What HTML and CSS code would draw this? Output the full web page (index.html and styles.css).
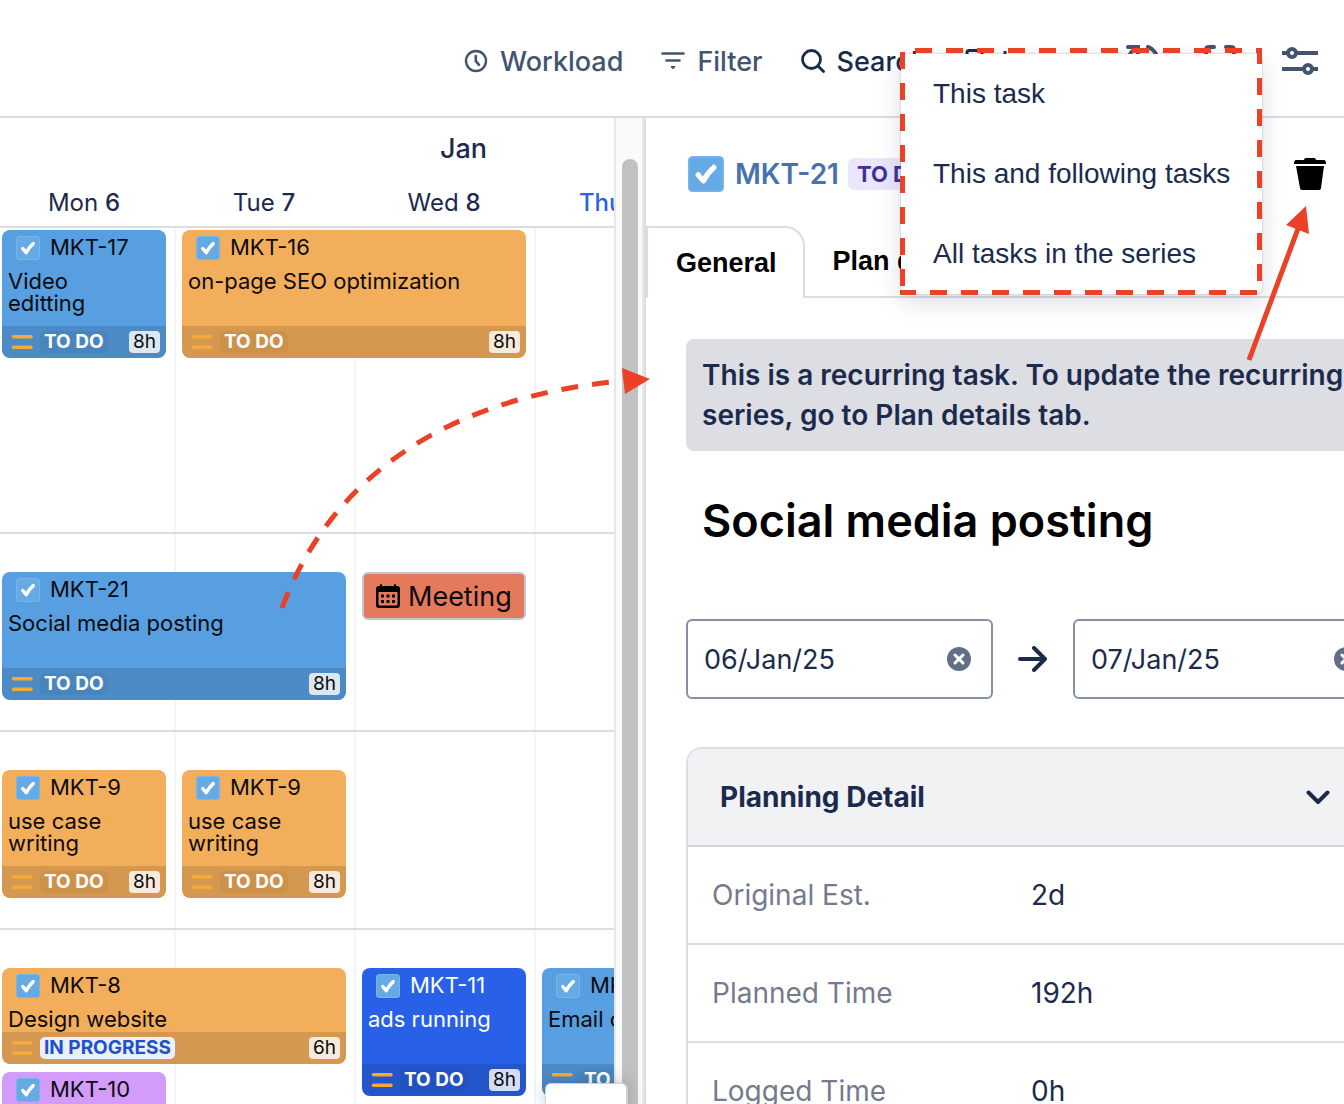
FILE: index.html
```html
<!DOCTYPE html>
<html lang="en">
<head>
  <meta charset="UTF-8" />
  <meta name="viewport" content="width=device-width, initial-scale=1" />
  <title>Planner - MKT-21</title>
  <link rel="stylesheet" href="styles.css">
</head>
<body>
  <!-- shared icons -->
  <svg class="sprite" aria-hidden="true">
    <symbol id="task" viewBox="0 0 24 24">
      <rect x="0.5" y="0.5" width="23" height="23" rx="2.5" fill="#65aae5" stroke="#7ab5e8" />
      <path d="M6.800 12.600l3.400 4q3-5.500 7-9" fill="none" stroke="#fff" stroke-width="3.5" stroke-linecap="round" stroke-linejoin="round" />
    </symbol>
    <symbol id="medium" viewBox="0 0 22 16">
      <path d="M2.500 2.800h17.500M2.500 13.200h17.500" fill="none" stroke="#f5aa37" stroke-width="3.6" stroke-linecap="round" />
    </symbol>
    <symbol id="clear" viewBox="0 0 24 24">
      <circle cx="12" cy="12" r="12" fill="#626f86" />
      <path d="M8 8l8 8M16 8l-8 8" stroke="#fff" stroke-width="3" stroke-linecap="round" />
    </symbol>
  </svg>

  <div class="page">
    <!-- top toolbar -->
    <header class="toolbar">
      <button class="tool" type="button">
        <svg class="tool-icon" viewBox="0 0 24 24"><circle cx="12" cy="12" r="10" fill="none" stroke="currentColor" stroke-width="2.4" /><path d="M11.8 7v5l3.2 3.800" fill="none" stroke="currentColor" stroke-width="2.6" stroke-linecap="round" /></svg>
        <span>Workload</span>
      </button>
      <button class="tool" type="button">
        <svg class="tool-icon" viewBox="0 0 24 24"><path d="M1.500 4.500h21M5.500 11.500h13" fill="none" stroke="currentColor" stroke-width="2.6" stroke-linecap="round" /><path d="M10 17.500h4l-1.500 2h-1z" fill="currentColor" stroke="currentColor" stroke-linejoin="round" /></svg>
        <span>Filter</span>
      </button>
      <button class="tool tool-dark" type="button">
        <svg class="tool-icon" viewBox="0 0 24 24"><circle cx="10.5" cy="10.5" r="9" fill="none" stroke="currentColor" stroke-width="2.8" /><path d="M17 17l5.500 5.500" stroke="currentColor" stroke-width="2.8" stroke-linecap="round" /></svg>
        <span>Search</span>
      </button>
      <button class="tool tool-dark" type="button" aria-label="Board">
        <svg class="board-icon" viewBox="0 0 44 26"><rect x="2" y="2.5" width="15" height="22" rx="2" fill="none" stroke="currentColor" stroke-width="3" /><path d="M40 3v22" stroke="currentColor" stroke-width="3" /></svg>
      </button>
      <div class="tool-group">
        <button class="tool" type="button" aria-label="Refresh">
          <svg class="group-icon" viewBox="0 0 32 32"><path d="M2 2h10v9M11 3A14 14 0 0 0 9 28M22 2a14 14 0 0 1 1 26M30 30H20v-9" fill="none" stroke="currentColor" stroke-width="4" stroke-linecap="round" /></svg>
        </button>
        <button class="tool" type="button" aria-label="Full screen">
          <svg class="group-icon" viewBox="0 0 32 32"><path d="M2 11V5q0-3 3-3h5M22 2h5q3 0 3 3v6M2 21v6q0 3 3 3h5M22 30h5q3 0 3-3v-6" fill="none" stroke="currentColor" stroke-width="4" stroke-linecap="round" /></svg>
        </button>
        <button class="tool" type="button" aria-label="View settings">
          <svg class="slider-icon" viewBox="0 0 36 28"><path d="M0 6h36M0 22h36" stroke="currentColor" stroke-width="4" /><circle cx="10" cy="6" r="4" fill="#fff" stroke="currentColor" stroke-width="4" /><circle cx="26" cy="22" r="4" fill="#fff" stroke="currentColor" stroke-width="4" /></svg>
        </button>
      </div>
    </header>

    <div class="main">
      <!-- timeline -->
      <section class="timeline">
        <div class="timeline-head">
          <div class="month">Jan</div>
          <div class="days">
            <div class="day">Mon <b>6</b></div>
            <div class="day">Tue <b>7</b></div>
            <div class="day">Wed <b>8</b></div>
            <div class="day today">Thu <b>9</b></div>
          </div>
        </div>

        <div class="lanes">
          <div class="lane lane-first">
            <article class="card blue">
              <div class="card-id"><svg class="task-icon"><use href="#task" /></svg>MKT-17</div>
              <div class="card-title">Video editting</div>
              <div class="card-foot"><svg class="prio"><use href="#medium" /></svg><span class="status">TO DO</span><span class="hours">8h</span></div>
            </article>
            <article class="card orange wide">
              <div class="card-id"><svg class="task-icon"><use href="#task" /></svg>MKT-16</div>
              <div class="card-title">on-page SEO optimization</div>
              <div class="card-foot"><svg class="prio"><use href="#medium" /></svg><span class="status">TO DO</span><span class="hours">8h</span></div>
            </article>
          </div>

          <div class="lane">
            <article class="card blue wide">
              <div class="card-id"><svg class="task-icon"><use href="#task" /></svg>MKT-21</div>
              <div class="card-title">Social media posting</div>
              <div class="card-foot"><svg class="prio"><use href="#medium" /></svg><span class="status">TO DO</span><span class="hours">8h</span></div>
            </article>
            <div class="event">
              <svg class="event-icon" viewBox="0 0 24 24"><path d="M3 2h1V1q0-1 1-1t1 1v1h12V1q0-1 1-1t1 1v1h1q3 0 3 3v16q0 3-3 3H3q-3 0-3-3V5q0-3 3-3zm-.5 6v12q0 1.500 1.500 1.500h16q1.500 0 1.500-1.500V8z" fill-rule="evenodd" /><path d="M5 10.500h3v3H5zM10.500 10.500h3v3h-3zM16 10.500h3v3h-3zM5 16h3v3H5zM10.500 16h3v3h-3zM16 16h3v3h-3z" /></svg>
              <span>Meeting</span>
            </div>
          </div>

          <div class="lane">
            <article class="card orange">
              <div class="card-id"><svg class="task-icon"><use href="#task" /></svg>MKT-9</div>
              <div class="card-title">use case writing</div>
              <div class="card-foot"><svg class="prio"><use href="#medium" /></svg><span class="status">TO DO</span><span class="hours">8h</span></div>
            </article>
            <article class="card orange">
              <div class="card-id"><svg class="task-icon"><use href="#task" /></svg>MKT-9</div>
              <div class="card-title">use case writing</div>
              <div class="card-foot"><svg class="prio"><use href="#medium" /></svg><span class="status">TO DO</span><span class="hours">8h</span></div>
            </article>
          </div>

          <div class="lane">
            <article class="card orange wide short">
              <div class="card-id"><svg class="task-icon"><use href="#task" /></svg>MKT-8</div>
              <div class="card-title">Design website</div>
              <div class="card-foot"><svg class="prio"><use href="#medium" /></svg><span class="status progress">IN PROGRESS</span><span class="hours">6h</span></div>
            </article>
            <article class="card navy tall">
              <div class="card-id"><svg class="task-icon"><use href="#task" /></svg>MKT-11</div>
              <div class="card-title">ads running</div>
              <div class="card-foot"><svg class="prio"><use href="#medium" /></svg><span class="status">TO DO</span><span class="hours">8h</span></div>
            </article>
            <article class="card blue tall">
              <div class="card-id"><svg class="task-icon"><use href="#task" /></svg>MKT</div>
              <div class="card-title">Email c</div>
              <div class="card-foot"><svg class="prio"><use href="#medium" /></svg><span class="status">TO DO</span></div>
            </article>
            <article class="card purple">
              <div class="card-id"><svg class="task-icon"><use href="#task" /></svg>MKT-10</div>
            </article>
          </div>
        </div>
      </section>

      <!-- scroll bar of the timeline -->
      <div class="scroll-track">
        <div class="scroll-thumb"></div>
      </div>

      <!-- task details -->
      <aside class="details">
        <div class="details-head">
          <svg class="head-icon"><use href="#task" /></svg>
          <a class="task-key" href="#">MKT-21</a>
          <span class="badge">TO DO</span>
          <button class="trash" type="button" aria-label="Delete task">
            <svg viewBox="0 0 32 32"><path d="M10 2q0-2 2-2h8q2 0 2 2h8q2 0 2 4H0q0-4 2-4zM2 8h28l-3 22q0 2-2 2H8q-2 0-2-2z" /></svg>
          </button>
        </div>

        <nav class="tabs">
          <a class="tab active" href="#">General</a>
          <a class="tab" href="#">Plan details</a>
        </nav>

        <div class="details-body">
          <p class="notice">This is a recurring task. To update the recurring series, go to Plan details tab.</p>
          <h1>Social media posting</h1>

          <div class="dates">
            <div class="date">
              <input type="text" value="06/Jan/25" aria-label="Start date">
              <button type="button" aria-label="Clear start date"><svg><use href="#clear" /></svg></button>
            </div>
            <svg class="arrow" viewBox="0 0 30 26"><path d="M2 13h24M16 2l11 11-11 11" fill="none" stroke="currentColor" stroke-width="4" stroke-linecap="round" stroke-linejoin="round" /></svg>
            <div class="date">
              <input type="text" value="07/Jan/25" aria-label="End date">
              <button type="button" aria-label="Clear end date"><svg><use href="#clear" /></svg></button>
            </div>
          </div>

          <div class="planning">
            <button class="planning-head" type="button">
              <span>Planning Detail</span>
              <svg viewBox="0 0 24 14"><path d="M2.500 2.500L12 12l9.500-9.500" fill="none" stroke="currentColor" stroke-width="4" stroke-linecap="round" stroke-linejoin="round" /></svg>
            </button>
            <table>
              <tr><th scope="row">Original Est.</th><td>2d</td></tr>
              <tr><th scope="row">Planned Time</th><td>192h</td></tr>
              <tr><th scope="row">Logged Time</th><td>0h</td></tr>
            </table>
          </div>
        </div>
      </aside>
    </div>

    <!-- small popup over the bottom of the timeline -->
    <div class="popup"></div>

    <!-- delete menu -->
    <div class="menu" role="menu">
      <button type="button" role="menuitem">This task</button>
      <button type="button" role="menuitem">This and following tasks</button>
      <button type="button" role="menuitem">All tasks in the series</button>
    </div>

    <!-- red arrows and dashed frame -->
    <svg class="marks" viewBox="0 0 1344 1104" width="1344" height="1104" aria-hidden="true">
      <g fill="none" stroke="#eb4126" stroke-width="5">
        <g stroke-dasharray="17 14">
          <path d="M915 50.500H1262" />
          <path d="M1259.500 48V295" stroke-dashoffset="1" />
          <path d="M900 292.500H1262" stroke-dashoffset="1" />
          <path d="M902.500 52V295" />
          <path d="M282 608C328 484 438 398 622 381" />
        </g>
        <path d="M1249 360L1299 226" />
      </g>
      <path d="M650 379L622 368L625 394ZM1306 206L1286 225L1309 234Z" fill="#eb4126" />
    </svg>
  </div>
</body>
</html>
```

FILE: styles.css
```css
* {
  box-sizing: border-box;
}

body {
  margin: 0;
  background: #fff;
  color: #1c2b4d;
  font-family: Inter, "Liberation Sans", sans-serif;
  font-size: 28px;
}

button {
  border: 0;
  padding: 0;
  background: none;
  color: inherit;
  font: inherit;
  cursor: pointer;
}

a {
  color: inherit;
  text-decoration: none;
}

svg {
  display: block;
}

.sprite {
  position: absolute;
  width: 0;
  height: 0;
}

.page {
  position: relative;
  display: flex;
  flex-direction: column;
  height: 100vh;
  overflow: hidden;
}

/* top toolbar */
.toolbar {
  display: flex;
  align-items: center;
  gap: 38px;
  flex: none;
  height: 118px;
  padding: 6px 26px 0 464px;
  border-bottom: 2px solid #dcdde3;
}

.tool {
  display: flex;
  align-items: center;
  gap: 12px;
  color: #44546f;
  font-size: 27px;
  font-weight: 500;
}

.tool-dark {
  color: #172b4d;
}

.tool-icon {
  width: 24px;
  height: 24px;
}

.board-icon {
  width: 44px;
  height: 26px;
}

.tool-group {
  display: flex;
  align-items: center;
  gap: 46px;
  margin-left: auto;
}

.group-icon {
  width: 32px;
  height: 32px;
}

.slider-icon {
  width: 36px;
  height: 28px;
}

.main {
  display: flex;
  flex: 1;
  min-height: 0;
}

/* timeline */
.timeline {
  display: flex;
  flex-direction: column;
  flex: 1;
  min-width: 0;
  overflow: hidden;
}

.timeline-head {
  flex: none;
  height: 110px;
  padding-top: 13px;
  border-bottom: 2px solid #dcdde3;
}

.month {
  padding-left: 440px;
  font-size: 27px;
  font-weight: 500;
  line-height: 36px;
}

.days {
  display: grid;
  grid-template-columns: repeat(4, 180px);
  margin-left: -6px;
  padding-top: 18px;
}

.day {
  font-size: 24px;
  line-height: 36px;
  text-align: center;
}

.day b {
  font-weight: 500;
}

.today {
  color: #2d62de;
  font-weight: 500;
}

.today b {
  padding: 0 12px;
}

.lanes {
  flex: 1;
  margin-left: -4px;
  background: repeating-linear-gradient(to right, transparent 0 178px, #f5f5f7 178px 180px);
}

.lane {
  display: grid;
  grid-template-columns: repeat(4, 180px);
  align-items: start;
  row-gap: 8px;
  min-height: 198px;
  padding-top: 38px;
  border-bottom: 2px solid #dcdde3;
}

.lane-first {
  min-height: 306px;
  padding-top: 2px;
}

/* task cards */
.card {
  display: flex;
  flex-direction: column;
  height: 128px;
  margin: 0 10px 0 6px;
  border-radius: 8px;
  overflow: hidden;
  color: #0b0b0d;
  font-size: 22px;
  line-height: 22px;
}

.wide {
  grid-column: span 2;
}

.tall {
  grid-row: span 2;
}

.short {
  height: 96px;
}

.blue {
  background: #579fe1;
}

.orange {
  background: #f3ae5c;
}

.navy {
  background: #2861e8;
  color: #fff;
}

.purple {
  background: #d49cfa;
}

.card-id {
  display: flex;
  align-items: flex-start;
  gap: 10px;
  padding: 6px 14px 0;
}

.task-icon {
  width: 24px;
  height: 24px;
}

.card-title {
  padding: 10px 16px 0 6px;
}

.card-foot {
  display: flex;
  align-items: center;
  gap: 7px;
  height: 32px;
  margin-top: auto;
  padding: 0 6px 0 9px;
  background: rgba(0, 0, 0, 0.12);
}

.prio {
  width: 22px;
  height: 16px;
}

.status {
  padding: 0 4px;
  border-radius: 5px;
  background: rgba(0, 0, 0, 0.04);
  color: #fff;
  font-size: 19px;
  font-weight: 700;
}

.progress {
  background: #e9f0fe;
  color: #2250c8;
}

.hours {
  margin-left: auto;
  padding: 0 4px;
  border-radius: 4px;
  background: rgba(255, 255, 255, 0.8);
  color: #0b0b0d;
  font-size: 19px;
}

.event {
  display: flex;
  align-items: center;
  gap: 8px;
  height: 48px;
  margin: 0 10px 0 6px;
  padding: 0 12px;
  border: 2px solid #c1c7d0;
  border-radius: 6px;
  background: #e5795c;
  color: #0b0b0d;
  font-size: 27px;
}

.event-icon {
  flex: none;
  width: 24px;
  height: 24px;
}

.scroll-track {
  flex: 0 0 30px;
  padding: 41px 4px 0 6px;
  border: solid #e8e8eb;
  border-width: 0 2px;
  background: #fafafa;
}

.scroll-thumb {
  width: 16px;
  height: 100%;
  border-radius: 8px 8px 0 0;
  background: #c1c1c1;
}

/* task details */
.details {
  flex: 0 0 700px;
  border-left: 2px solid #dcdde3;
  overflow: hidden;
}

.details-head {
  display: flex;
  align-items: center;
  height: 108px;
  padding: 4px 18px 0 42px;
}

.head-icon {
  width: 36px;
  height: 36px;
}

.task-key {
  margin-left: 11px;
  color: #4672ad;
  font-size: 28px;
  font-weight: 600;
}

.badge {
  margin-left: 9px;
  padding: 0 9px;
  border-radius: 6px;
  background: #eae6fd;
  color: #403294;
  font-size: 22px;
  font-weight: 700;
  line-height: 32px;
}

.trash {
  margin-left: auto;
  color: #000;
}

.trash svg {
  width: 32px;
  height: 32px;
}

.tabs {
  display: flex;
  height: 72px;
  color: #000;
  font-family: "Liberation Sans", Arial, sans-serif;
  font-size: 27px;
  font-weight: 700;
  line-height: 70px;
}

.tab {
  flex: 1;
  padding-left: 28px;
  border-bottom: 2px solid #dcdde3;
}

.active {
  flex: none;
  padding-right: 26px;
  border: 2px solid #dcdde3;
  border-bottom: 0;
  border-radius: 0 20px 0 0;
}

.details-body {
  width: 776px;
  padding: 41px 42px 0 40px;
}

.notice {
  margin: 0;
  padding: 16px;
  border-radius: 8px;
  background: #dddee3;
  font-size: 28px;
  font-weight: 600;
  line-height: 40px;
}

h1 {
  margin: 40px 0 68px;
  padding-left: 16px;
  color: #000;
  font-size: 45px;
  font-weight: 600;
  line-height: 60px;
}

.dates {
  display: flex;
  align-items: center;
  justify-content: space-between;
}

.date {
  display: flex;
  align-items: center;
  width: 307px;
  height: 80px;
  padding: 0 20px 0 16px;
  border: 2px solid #8590a2;
  border-radius: 6px;
}

.date input {
  flex: 1;
  min-width: 0;
  border: 0;
  padding: 0;
  outline: 0;
  background: none;
  color: inherit;
  font: inherit;
  font-size: 27px;
}

.date svg {
  width: 24px;
  height: 24px;
}

.arrow {
  width: 30px;
  height: 26px;
}

.planning {
  margin-top: 48px;
  border: 2px solid #dcdfe4;
  border-radius: 16px 16px 0 0;
  overflow: hidden;
}

.planning-head {
  display: flex;
  align-items: center;
  justify-content: space-between;
  width: 100%;
  height: 98px;
  padding: 0 48px 0 32px;
  border-bottom: 2px solid #d0d5db;
  background: #f1f2f4;
  font-weight: 700;
  font-size: 28px;
}

.planning-head svg {
  width: 24px;
  height: 14px;
}

table {
  width: 100%;
  border-collapse: separate;
  border-spacing: 0;
}

th,
td {
  height: 98px;
  padding: 0 0 0 24px;
  border-bottom: 2px solid #dcdfe4;
  text-align: left;
  font-weight: 400;
}

th {
  width: 319px;
  color: #757a8c;
}

/* popup at the bottom */
.popup {
  position: absolute;
  left: 545px;
  bottom: 0;
  width: 83px;
  height: 21px;
  border: 2px solid #d0d0d4;
  border-width: 1px 2px 0 1px;
  border-radius: 6px 6px 0 0;
  background: #fff;
  box-shadow: 0 0 16px rgba(9, 30, 66, 0.25);
}

/* delete menu */
.menu {
  position: absolute;
  top: 54px;
  right: 82px;
  width: 361px;
  border-radius: 6px;
  background: #fff;
  box-shadow: 0 0 2px rgba(9, 30, 66, 0.3), 0 8px 24px rgba(9, 30, 66, 0.15);
}

.menu button {
  display: block;
  width: 100%;
  height: 80px;
  padding: 0 24px 0 32px;
  font-family: "Liberation Sans", Arial, sans-serif;
  font-size: 28px;
  text-align: left;
  white-space: nowrap;
}

.marks {
  position: absolute;
  top: 0;
  left: 0;
  pointer-events: none;
}
```
